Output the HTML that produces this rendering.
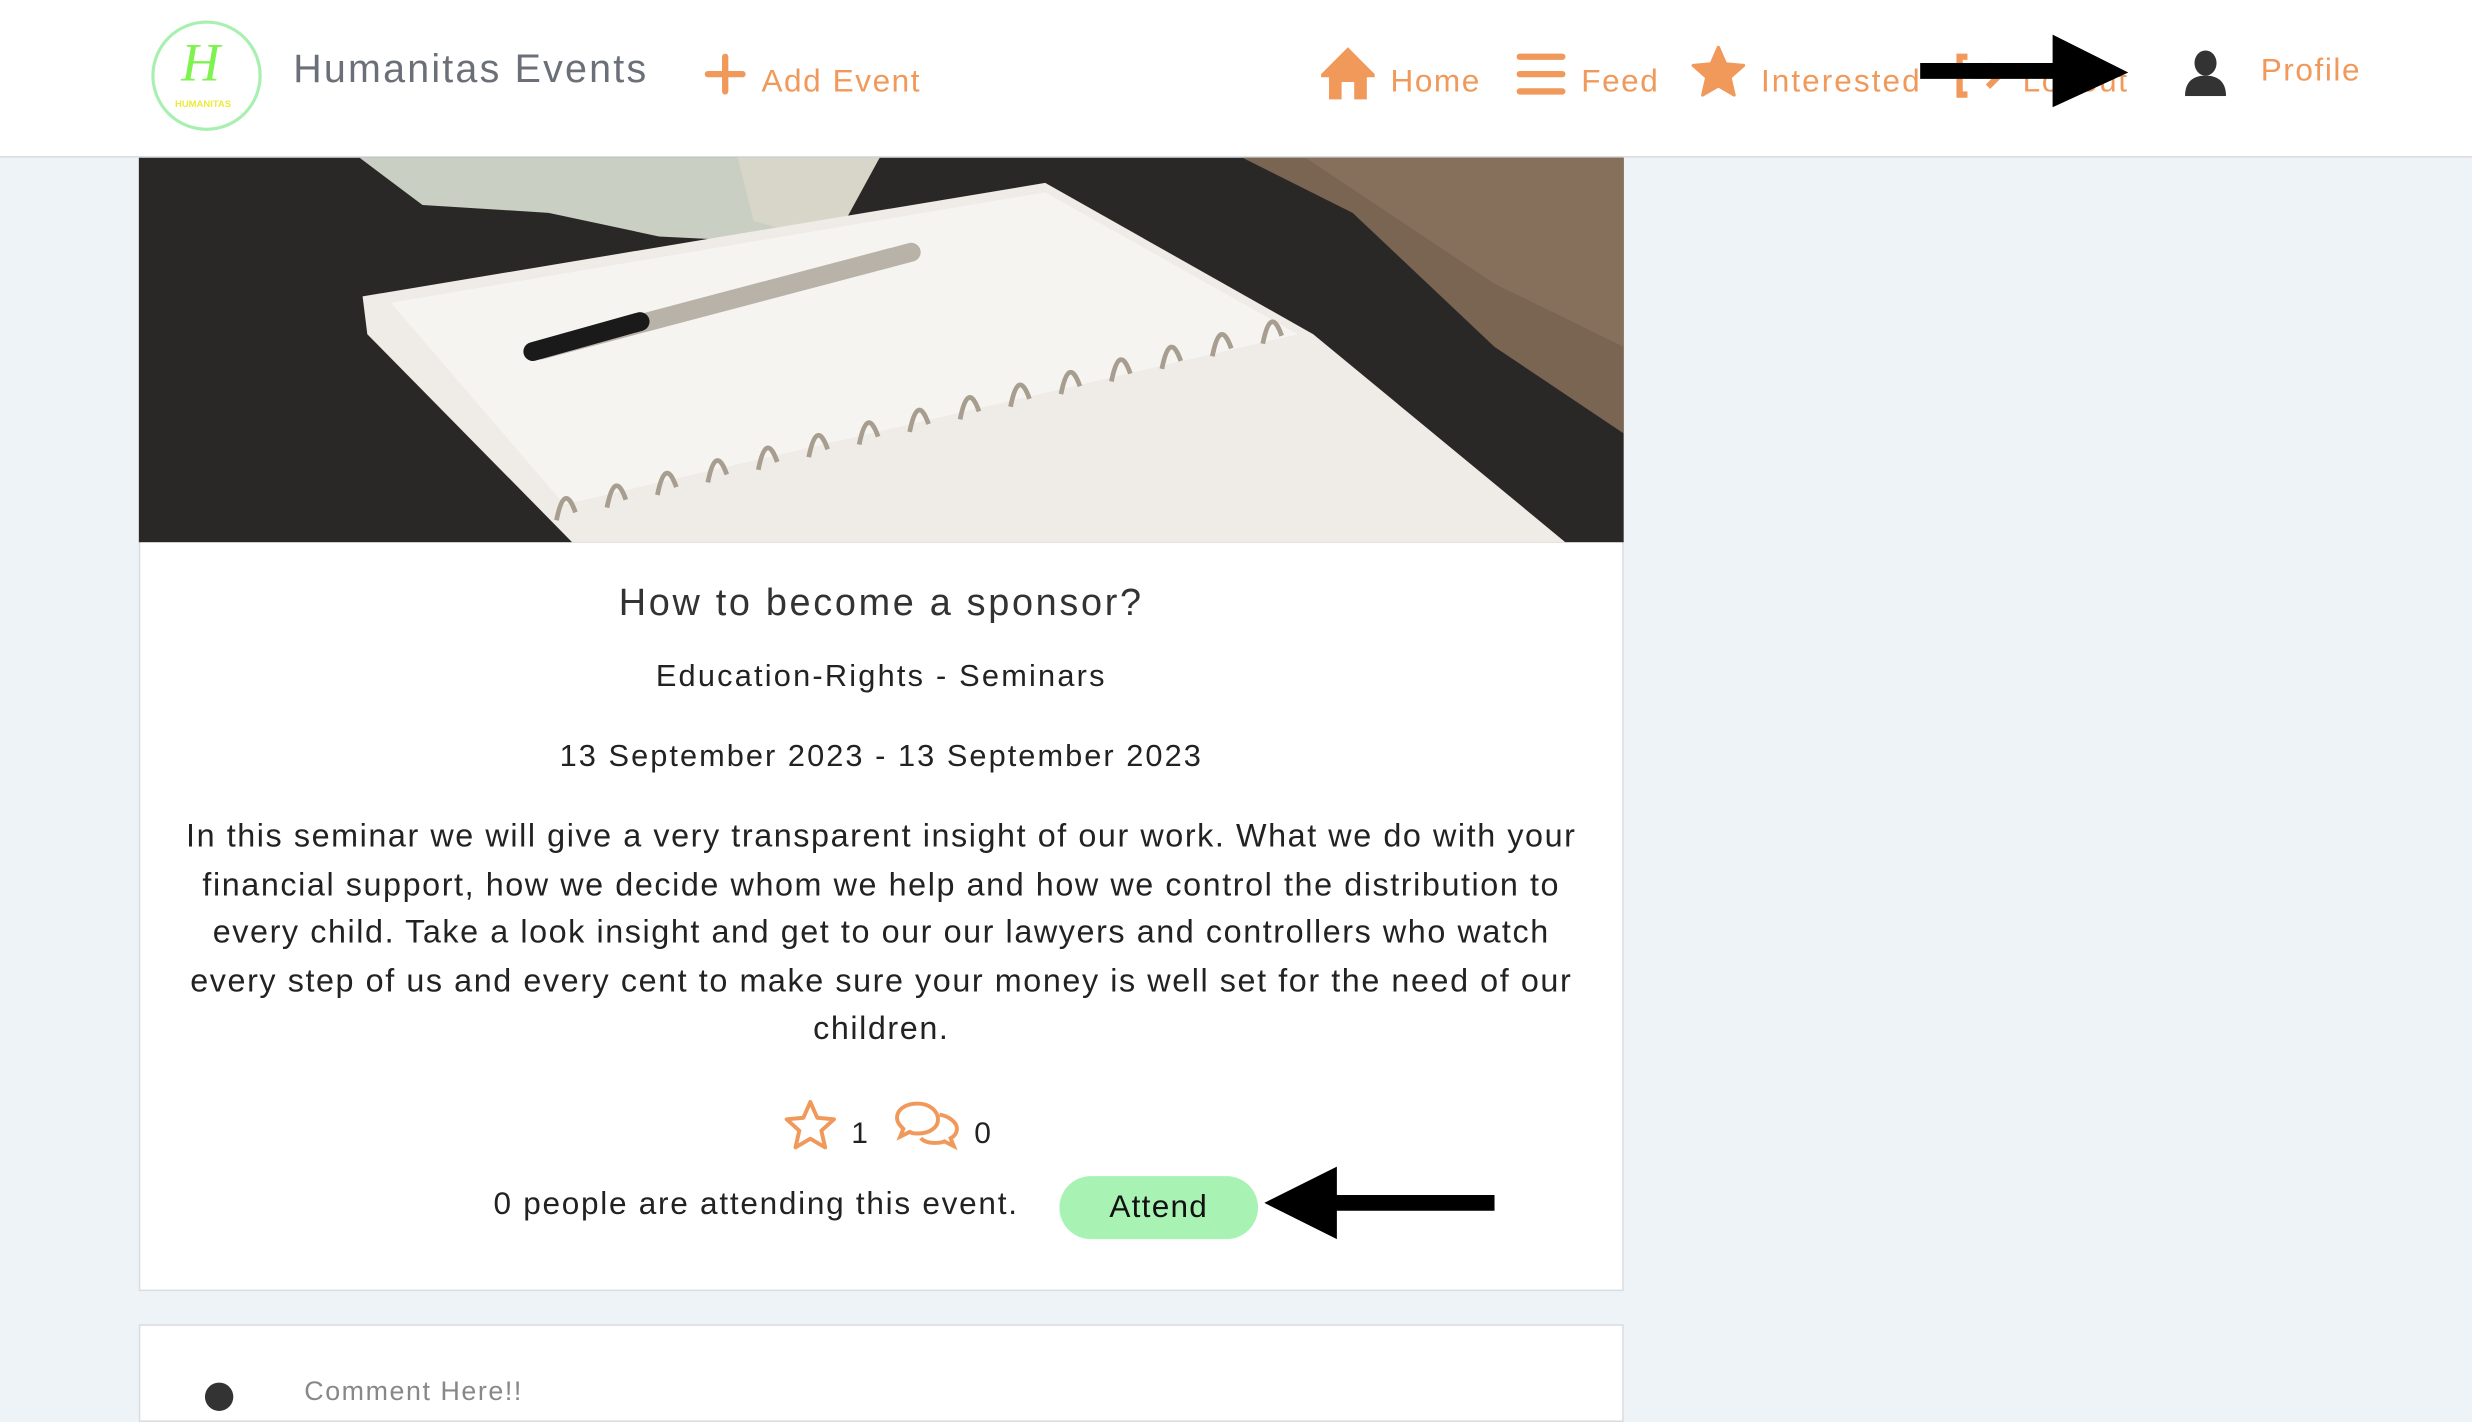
<!DOCTYPE html>
<html><head><meta charset="utf-8">
<style>
html,body{margin:0;padding:0;width:2472px;height:1396px;overflow:hidden;background:#eef3f7;}
#w{position:absolute;left:0;top:0;width:1568px;height:886px;transform:scale(1.5765);transform-origin:0 0;font-family:"Liberation Sans",sans-serif;}
.abs{position:absolute;white-space:nowrap;}
.hdr{position:absolute;left:0;top:0;width:1568px;height:99px;background:#fff;border-bottom:1px solid #d8dbe0;}
.or{color:#f0995a;font-size:20px;letter-spacing:1px;}
.card{position:absolute;left:88px;width:940px;background:#fff;border:1px solid #d8dde2;}
.c{text-align:center;color:#222;}
</style></head><body><div id="w">
<div class="hdr"></div>
<div class="abs" style="left:96px;top:13px;width:66px;height:66px;border:2px solid #a8f0b0;border-radius:50%;"></div>
<div class="abs" style="left:115px;top:22px;font:italic 34px 'Liberation Serif',serif;color:#7ef24e;">H</div>
<div class="abs" style="left:111px;top:64px;font-size:6px;color:#ecea3c;font-weight:bold;">HUMANITAS</div>
<div class="abs" style="left:186px;top:30px;font-size:25px;color:#6b7078;letter-spacing:1.4px;">Humanitas Events</div>
<svg class="abs" style="left:447px;top:34px" width="26" height="26" viewBox="0 0 26 26"><path d="M13 2v22M2 13h22" stroke="#f0995a" stroke-width="4" stroke-linecap="round"/></svg>
<div class="abs or" style="left:483px;top:41px;">Add Event</div>
<svg class="abs" style="left:836px;top:29px" width="38" height="35" viewBox="0 0 38 35"><path d="M19 1L2 18v2h5v14h8v-11h8v11h8V20h5v-2z" fill="#f0995a"/></svg>
<div class="abs or" style="left:882px;top:41px;">Home</div>
<svg class="abs" style="left:962px;top:33px" width="32" height="28" viewBox="0 0 32 28"><path d="M2 3h27M2 14h27M2 25h27" stroke="#f0995a" stroke-width="4" stroke-linecap="round"/></svg>
<div class="abs or" style="left:1003px;top:41px;">Feed</div>
<svg class="abs" style="left:1072px;top:28px" width="36" height="36" viewBox="0 0 36 36"><path d="M18 2l4.6 10.5 11.4 1-8.6 7.6 2.6 11.2L18 26.5 8 32.3l2.6-11.2L2 13.5l11.4-1z" fill="#f0995a" stroke="#f0995a" stroke-linejoin="round" stroke-width="2"/></svg>
<div class="abs or" style="left:1117px;top:41px;letter-spacing:1.3px;">Interested</div>
<svg class="abs" style="left:1239px;top:33px" width="36" height="30" viewBox="0 0 36 30"><path d="M9 3H4v24h5" stroke="#f0995a" stroke-width="4" fill="none"/><path d="M12 15h16M22 8l7 7-7 7" stroke="#f0995a" stroke-width="4" fill="none"/></svg>
<div class="abs or" style="left:1283px;top:41px;">Logout</div>
<svg class="abs" style="left:1216px;top:20px" width="136" height="50" viewBox="0 0 136 50"><path d="M2 20h84V2l48 24-48 22V30H2z" fill="#000"/></svg>
<svg class="abs" style="left:1384px;top:31px" width="30" height="30" viewBox="0 0 30 30"><ellipse cx="15" cy="9" rx="7" ry="8" fill="#333"/><path d="M2 30c0-9 5-13 13-13s13 4 13 13z" fill="#333"/></svg>
<div class="abs or" style="left:1434px;top:34px;">Profile</div>
<div class="card" style="top:99px;height:718px;"></div>
<svg class="abs" style="left:88px;top:100px" width="942" height="244" viewBox="0 0 942 244">
<rect width="942" height="244" fill="#2a2826"/>
<polygon points="700,0 942,0 942,175 860,120 770,35" fill="#7a6552"/>
<polygon points="740,0 942,0 942,120 860,80" fill="#8c7560" opacity=".7"/>
<polygon points="140,0 470,0 430,55 330,50 260,35 180,30" fill="#c9cfc2"/>
<polygon points="380,0 470,0 440,55 390,40" fill="#d8d6c8"/>
<polygon points="142,88 575,16 745,112 905,244 275,244 145,112" fill="#efece8"/>
<polygon points="160,92 575,22 735,112 270,220" fill="#f6f4f1"/>
<line x1="255" y1="122" x2="490" y2="60" stroke="#b8b2a8" stroke-width="12" stroke-linecap="round"/>
<line x1="250" y1="123" x2="318" y2="104" stroke="#1a1a1a" stroke-width="12" stroke-linecap="round"/>
<g fill="none" stroke="#a89e90" stroke-width="3">
<path d="M265 230q5-25 12-5M297 222q5-25 12-5M329 214q5-25 12-5M361 206q5-25 12-5M393 198q5-25 12-5M425 190q5-25 12-5M457 182q5-25 12-5M489 174q5-25 12-5M521 166q5-25 12-5M553 158q5-25 12-5M585 150q5-25 12-5M617 142q5-25 12-5M649 134q5-25 12-5M681 126q5-25 12-5M713 118q5-25 12-5"/>
</g>
</svg>
<div class="abs c" style="left:88px;width:942px;top:369px;font-size:24px;color:#333;letter-spacing:1.7px;">How to become a sponsor?</div>
<div class="abs c" style="left:88px;width:942px;top:418px;font-size:19.5px;letter-spacing:1.4px;">Education-Rights - Seminars</div>
<div class="abs c" style="left:88px;width:942px;top:469px;font-size:19.5px;letter-spacing:1.3px;">13 September 2023 - 13 September 2023</div>
<div class="abs c" style="left:88px;width:942px;top:516px;font-size:20.5px;line-height:30.5px;white-space:normal;letter-spacing:1px;">In this seminar we will give a very transparent insight of our work. What we do with your<br>financial support, how we decide whom we help and how we control the distribution to<br>every child. Take a look insight and get to our our lawyers and controllers who watch<br>every step of us and every cent to make sure your money is well set for the need of our<br>children.</div>
<svg class="abs" style="left:496px;top:697px" width="36" height="34" viewBox="0 0 36 34"><path d="M18 2l4.4 10 10.6 1-8 7.2 2.4 10.6L18 25.3l-9.4 5.5L11 20.2 3 13l10.6-1z" fill="none" stroke="#f0995a" stroke-width="2.5" stroke-linejoin="round"/></svg>
<div class="abs" style="left:540px;top:709px;font-size:19px;color:#222;">1</div>
<svg class="abs" style="left:566px;top:697px" width="44" height="34" viewBox="0 0 44 34"><path d="M16 3c-8 0-13 4-13 9 0 3 2 5 4 7l-2 5 6-3c2 1 3 1 5 1 8 0 13-4 13-9s-5-10-13-10z" fill="none" stroke="#f0995a" stroke-width="2.5"/><path d="M30 10c6 1 11 5 11 9 0 3-2 5-4 6l2 5-6-3c-2 1-4 1-6 1-4 0-7-1-9-3" fill="none" stroke="#f0995a" stroke-width="2.5"/></svg>
<div class="abs" style="left:618px;top:709px;font-size:19px;color:#222;">0</div>
<div class="abs" style="left:313px;top:753px;font-size:20px;color:#222;letter-spacing:1.1px;">0 people are attending this event.</div>
<div class="abs" style="left:672px;top:746px;width:126px;height:40px;border-radius:20px;background:#a8f2b4;text-align:center;line-height:40px;font-size:20px;color:#111;letter-spacing:0.8px;">Attend</div>
<svg class="abs" style="left:800px;top:738px" width="150" height="50" viewBox="0 0 150 50"><path d="M2 25L48 2v18h100v10H48v18z" fill="#000"/></svg>
<div class="card" style="top:840px;height:60px;"></div>
<div class="abs" style="left:130px;top:877px;width:18px;height:18px;border-radius:50%;background:#333;"></div>
<div class="abs" style="left:193px;top:873px;font-size:17px;color:#888;letter-spacing:1px;">Comment Here!!</div>
</div></body></html>
